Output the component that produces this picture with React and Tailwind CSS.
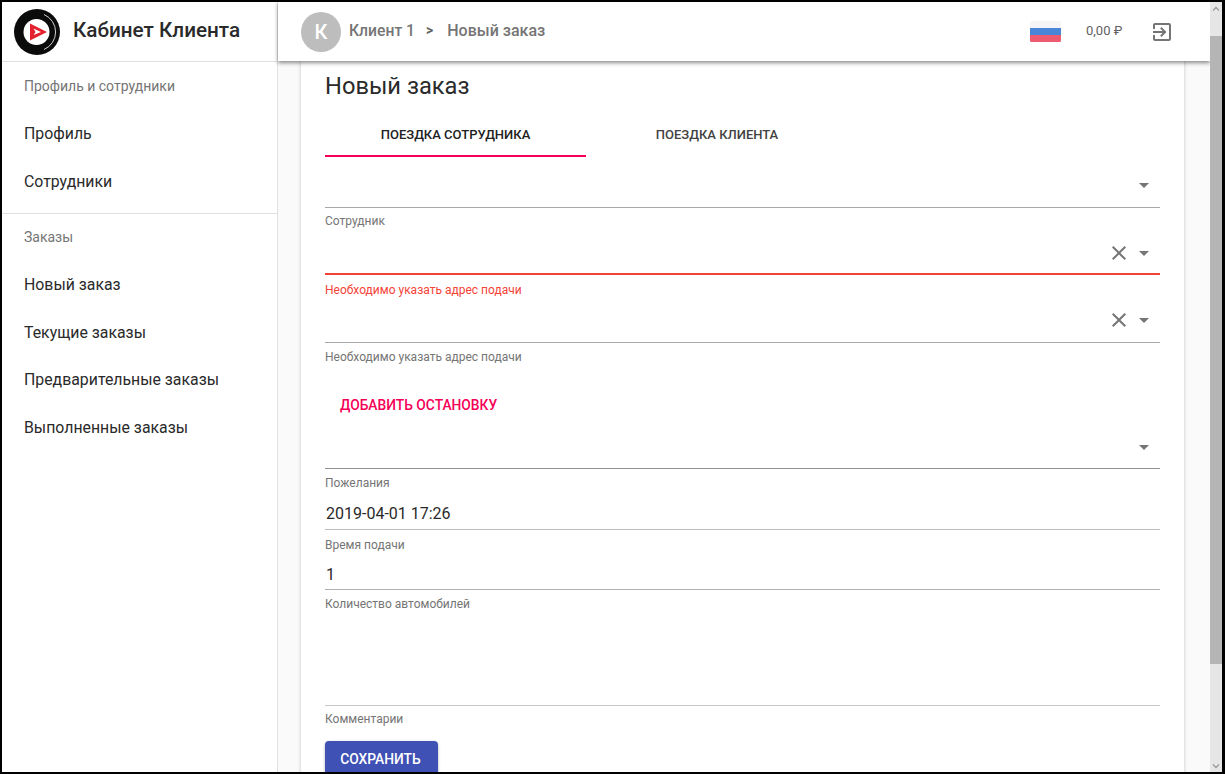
import React from 'react';

const CaretDown = () => (
  <svg className="w-6 h-6 text-[#757575]" viewBox="0 0 24 24" fill="currentColor">
    <path d="M7 10l5 5 5-5z" />
  </svg>
);

const ClearIcon = () => (
  <svg className="w-6 h-6 text-[#757575]" viewBox="0 0 24 24" fill="currentColor">
    <path d="M19 6.41L17.59 5 12 10.59 6.41 5 5 6.41 10.59 12 5 17.59 6.41 19 12 13.41 17.59 19 19 17.59 13.41 12z" />
  </svg>
);

const Logo = () => (
  <svg className="w-[46px] h-[46px]" viewBox="0 0 46 46">
    <circle cx="23" cy="23" r="23" fill="#0b0b0b" />
    <path d="M30 5.5 A19 19 0 0 1 30 40.5" fill="none" stroke="#e8e8e8" strokeWidth="0.9" />
    <circle cx="22.5" cy="23" r="13" fill="#fff" />
    <path d="M16 14.5 L33 23 L16 31.5 Z" fill="#e5202e" />
    <path d="M19.5 19.5 L27 23 L19.5 26 L21.5 23 Z" fill="#fff" />
  </svg>
);

const Flag = () => (
  <div className="w-[31px] h-[22px] rounded-[3px] overflow-hidden flex flex-col">
    <div className="flex-1 bg-[#f5f5f8]" />
    <div className="flex-1 bg-[#4a86d8]" />
    <div className="flex-1 bg-[#ee5a6f]" />
  </div>
);

const SideItem = ({ children }) => (
  <div className="h-[47.6px] pl-[22px] flex items-center text-[15.85px] text-[#2a2a2a]">{children}</div>
);

const SideTitle = ({ children, className }) => (
  <div className={`pl-[22px] flex items-center text-[14px] text-[#757575] ${className}`}>{children}</div>
);

const Field = ({ height, value, valueClass = 'pb-[3px]', clear, caret, iconMb = 'mb-[9px]', lineClass, helper, helperClass = 'pt-[6px] text-[#757575]', helperHeight = 23 }) => (
  <div>
    <div className={`flex items-end justify-end ${lineClass}`} style={{ height }}>
      {value && <div className={`flex-1 pl-px text-[16px] leading-[24px] text-[#2a2a2a] ${valueClass}`}>{value}</div>}
      {clear && <div className={`${iconMb} mr-[1px]`}><ClearIcon /></div>}
      {caret && <div className={`${iconMb} mr-[4px]`}><CaretDown /></div>}
    </div>
    <div className={`text-[12px] leading-[14px] ${helperClass}`} style={{ height: helperHeight }}>
      {helper}
    </div>
  </div>
);

export default function App() {
  return (
    <div className="h-[774px] w-[1225px] overflow-hidden border-2 border-r-[3px] border-black bg-white flex font-['Roboto',sans-serif]">
      {/* Sidebar */}
      <aside className="w-[276px] shrink-0 border-r border-[#e0e0e0] bg-white">
        <div className="h-[60px] border-b border-[#e0e0e0] flex items-center pl-[12px] gap-[12px]">
          <Logo />
          <span className="pb-[2px] text-[20.7px] font-medium text-[#2a2a2a] ml-[1px]">Кабинет Клиента</span>
        </div>
        <div className="border-b border-[#e0e0e0] h-[152px]">
          <SideTitle className="h-[48px]">Профиль и сотрудники</SideTitle>
          <SideItem>Профиль</SideItem>
          <SideItem>Сотрудники</SideItem>
        </div>
        <SideTitle className="h-[47px]">Заказы</SideTitle>
        <SideItem>Новый заказ</SideItem>
        <SideItem>Текущие заказы</SideItem>
        <SideItem>Предварительные заказы</SideItem>
        <SideItem>Выполненные заказы</SideItem>
      </aside>

      {/* Main column */}
      <div className="w-[932px] shrink-0 flex flex-col relative bg-[#fafafa]">
        <header className="h-[59px] shrink-0 bg-white flex items-center pl-[23px] shadow-[0_2px_4px_rgba(0,0,0,0.45)] relative z-10">
          <div className="w-[40px] h-[40px] rounded-full bg-[#bdbdbd] flex items-center justify-center text-white text-[20px] font-medium">К</div>
          <span className="pb-[2px] ml-[8px] text-[15.7px] font-medium text-[#757575]">Клиент 1</span>
          <span className="pb-[2px] ml-[11px] text-[14px] font-bold text-[#616161]">&gt;</span>
          <span className="pb-[2px] ml-[14px] text-[16px] font-medium text-[#757575]">Новый заказ</span>
          <div className="ml-auto flex items-center">
            <Flag />
            <span className="pb-[2px] ml-[25px] text-[13px] text-[#616161] w-[37px]">0,00 ₽</span>
            <svg className="ml-[27px] mr-[36px] w-6 h-6 text-[#757575]" viewBox="0 0 24 24" fill="currentColor">
              <path d="M10.09 15.59L11.5 17l5-5-5-5-1.41 1.41L12.67 11H3v2h9.67l-2.58 2.59zM19 3H5c-1.11 0-2 .9-2 2v4h2V5h14v14H5v-4H3v4c0 1.1.89 2 2 2h14c1.1 0 2-.9 2-2V5c0-1.1-.9-2-2-2z" />
            </svg>
          </div>
        </header>

        <main className="flex-1 overflow-hidden pl-[22px]">
          <div className="w-[885px] h-[760px] bg-white border-x border-[#e4e4e4] px-[24px] shadow-[0_1px_3px_rgba(0,0,0,0.12)]">
            <h1 className="pt-[9px] h-[52px] text-[23.7px] leading-[32px] text-[#2a2a2a]">Новый заказ</h1>
            <div className="flex h-[44px] text-[13px] font-medium">
              <div className="w-[261px] pt-[2px] flex items-center justify-center border-b-2 border-[#f50057] text-[#212121]">ПОЕЗДКА СОТРУДНИКА</div>
              <div className="w-[262px] flex items-center justify-center text-[#424242]">ПОЕЗДКА КЛИЕНТА</div>
            </div>
            <Field height={51} caret iconMb="mb-[10px]" lineClass="border-b-[1.5px] border-[#a8a8a8]" helper="Сотрудник" helperHeight={21} />
            <Field height={46} clear caret iconMb="mb-[8px]" lineClass="border-b-2 border-[#f44336]" helper="Необходимо указать адрес подачи" helperClass="pt-[8px] text-[#f44336]" helperHeight={23} />
            <Field height={45} clear caret iconMb="mb-[10px]" lineClass="border-b-[1.5px] border-[#a8a8a8]" helper="Необходимо указать адрес подачи" helperClass="pt-[7px] text-[#757575]" />
            <div className="h-[73px] pl-[15px] pt-[27px]">
              <span className="text-[13.8px] leading-[24px] font-medium text-[#f50057]">ДОБАВИТЬ ОСТАНОВКУ</span>
            </div>
            <Field height={30} caret lineClass="border-b-[1.5px] border-[#909090]" helper="Пожелания" helperClass="pt-[7px] text-[#757575]" helperHeight={22} />
            <Field height={39} value="2019-04-01 17:26" lineClass="border-b-[1.5px] border-[#bdbdbd]" helper="Время подачи" helperClass="pt-[8px] text-[#757575]" helperHeight={22} />
            <Field height={38} value="1" valueClass="pb-[2px]" lineClass="border-b-[1.5px] border-[#b0b0b0]" helper="Количество автомобилей" helperClass="pt-[7px] text-[#757575]" helperHeight={22} />
            <Field height={94} lineClass="border-b-[1.5px] border-[#c8c8c8]" helper="Комментарии" helperHeight={23} />
            <button className="mt-[12px] w-[113px] h-[36px] pr-[2px] rounded-[4px] bg-[#3f51b5] text-white text-[13.8px] font-medium shadow-[0_1px_3px_rgba(0,0,0,0.3)]">СОХРАНИТЬ</button>
          </div>
        </main>
      </div>

      {/* Scrollbar */}
      <div className="w-[12px] shrink-0 bg-[#e6e6e6] flex flex-col items-center relative z-20">
        <div className="h-[34px] shrink-0 flex justify-center pt-[2px]">
          <svg className="w-[10px] h-[10px]" viewBox="0 0 10 10" fill="none" stroke="#9a9a9a" strokeWidth="1.3">
            <path d="M2 6.5 L5 3.5 L8 6.5" />
          </svg>
        </div>
        <div className="h-[628px] w-full shrink-0 bg-[#b5b5b5]" />
        <div className="mt-auto pb-[1px]">
          <svg className="w-[10px] h-[10px]" viewBox="0 0 10 10" fill="none" stroke="#9a9a9a" strokeWidth="1.3">
            <path d="M2 3.5 L5 6.5 L8 3.5" />
          </svg>
        </div>
      </div>
    </div>
  );
}
